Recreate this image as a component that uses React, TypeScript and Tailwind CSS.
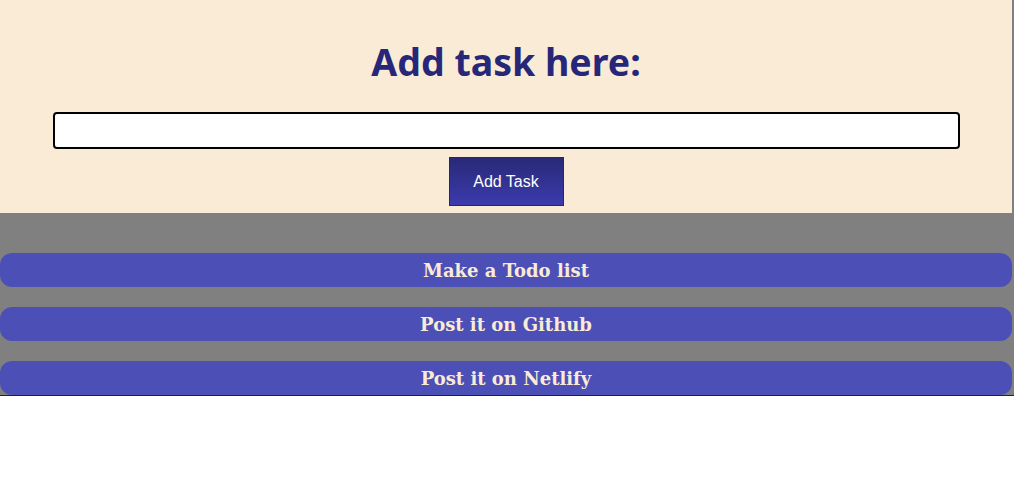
import React, { useState } from 'react';

const initialTasks = ['Make a Todo list', 'Post it on Github', 'Post it on Netlify'];

export default function App() {
	const [tasks, setTasks] = useState<string[]>(initialTasks);
	const [text, setText] = useState('');

	const addTask = () => {
		if (!text.trim()) return;
		setTasks([...tasks, text.trim()]);
		setText('');
	};

	return (
		<div className="w-[1014px] bg-[#808080]">
			{/* Form */}
			<div className="w-[1012px] bg-[#faebd7] pt-[36px] pb-[7px] flex flex-col items-center">
				<h1
					className="text-[37.5px] leading-[52px] font-bold text-[#27277a] mb-[24px]"
					style={{ fontFamily: '"Segoe UI", "Noto Sans", sans-serif' }}
				>
					Add task here:
				</h1>
				<input
					autoFocus
					value={text}
					onChange={(e) => setText(e.target.value)}
					className="w-[907px] h-[37px] bg-white border-2 border-black rounded-[4px] px-[2px] outline-none caret-black"
				/>
				<button
					onClick={addTask}
					className="mt-[8px] w-[115px] h-[49px] border border-[#24247a] bg-gradient-to-b from-[#292978] to-[#3b3bad] text-white text-[16px]"
					style={{ fontFamily: '"Liberation Sans", Arial, sans-serif' }}
				>
					Add Task
				</button>
			</div>

			{/* Task list */}
			<ul className="pt-[40px] flex flex-col gap-[20px] border-b border-[#222]">
				{tasks.map((t) => (
					<li
						key={t}
						className="w-[1012px] h-[34px] rounded-[12px] bg-[#4c50b6] text-[#faebd7] font-bold text-[18px] flex items-center justify-center"
						style={{ fontFamily: 'Georgia, "DejaVu Serif", serif' }}
					>
						{t}
					</li>
				))}
			</ul>
		</div>
	);
}
